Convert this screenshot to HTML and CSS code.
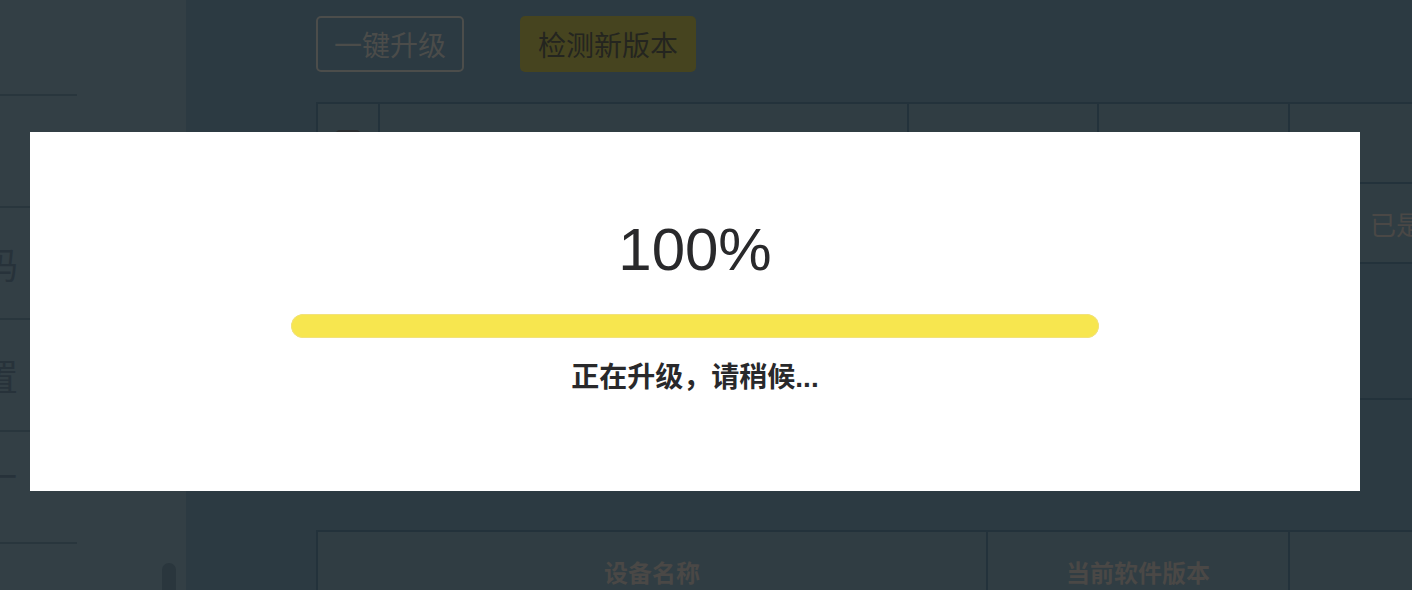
FILE: index.html
```html
<!DOCTYPE html>
<html lang="zh-CN">
<head>
<meta charset="utf-8">
<title>软件升级</title>
<link rel="stylesheet" href="styles.css">
</head>
<body>
<div class="page">
  <aside class="sidebar">
    <nav class="side-nav">
      <div class="side-head"></div>
      <div class="side-item"><span class="side-label"></span></div>
      <div class="side-item"><span class="side-label">修改密码</span></div>
      <div class="side-item"><span class="side-label">网络设置</span></div>
      <div class="side-item side-last"><span class="side-label">恢复出厂</span></div>
    </nav>
    <div class="scroll-thumb"></div>
  </aside>

  <main class="main">
    <div class="toolbar">
      <button class="btn btn-outline">一键升级</button>
      <button class="btn btn-primary">检测新版本</button>
    </div>

    <div class="grid grid-one">
      <div class="row row-head">
        <div class="cell c1"><span class="checkbox"></span></div>
        <div class="cell c2"></div>
        <div class="cell c3"></div>
        <div class="cell c4"></div>
        <div class="cell c5"></div>
      </div>
      <div class="row row-body">
        <div class="cell c1"><span class="checkbox"></span></div>
        <div class="cell c2">主控制器</div>
        <div class="cell c3">V2.1.0</div>
        <div class="cell c4">V2.1.0</div>
        <div class="cell c5">已是最新版本</div>
      </div>
      <div class="row row-empty">
        <div class="cell c1"></div>
        <div class="cell c2"></div>
        <div class="cell c3"></div>
        <div class="cell c4"></div>
        <div class="cell c5"></div>
      </div>
    </div>

    <p class="note">注意：升级过程中请勿断电或关闭设备，升级完成后设备将自动重启</p>

    <div class="grid grid-two">
      <div class="row row-head2">
        <div class="cell d1">设备名称</div>
        <div class="cell d2">当前软件版本</div>
        <div class="cell d3">升级状态</div>
      </div>
    </div>
  </main>
</div>

<div class="modal">
  <div class="percent">100%</div>
  <div class="track"><div class="fill" style="width:100%"></div></div>
  <div class="message">正在升级，请稍候...</div>
</div>
</body>
</html>
```

FILE: styles.css
```css
html, body {
  margin: 0;
  height: 590px;
  overflow: hidden;
  background: #2c3a42;
  font-family: "Noto Sans CJK SC", "Liberation Sans", sans-serif;
}

.page {
  display: flex;
  height: 590px;
}

/* Sidebar */
.sidebar {
  position: relative;
  flex: 0 0 186px;
  background: #333f45;
}

.side-nav {
  width: 77px;
}

.side-head {
  height: 94px;
}

.side-item {
  box-sizing: border-box;
  height: 112px;
  border-top: 2px solid #29363d;
  display: flex;
  align-items: center;
  font-size: 36px;
  color: #27323a;
}

.side-last {
  height: 114px;
  border-bottom: 2px solid #29363d;
}

.side-label {
  width: 18px;
  display: flex;
  justify-content: flex-end;
  white-space: nowrap;
  line-height: 1;
}

.scroll-thumb {
  position: absolute;
  left: 162px;
  top: 563px;
  width: 14px;
  height: 40px;
  border-radius: 7px;
  background: #2a363d;
}

/* Main */
.main {
  flex: 1;
  min-width: 0;
  padding: 16px 0 0 130px;
  overflow: hidden;
}

.toolbar {
  display: flex;
  gap: 56px;
}

.btn {
  box-sizing: border-box;
  height: 56px;
  padding: 0 16px;
  border: 2px solid transparent;
  border-radius: 5px;
  font-family: "Noto Sans CJK SC", sans-serif;
  font-size: 28px;
  line-height: 52px;
  margin: 0;
}

.btn-outline {
  border-color: #4c4d4b;
  color: #4b4c4a;
  background: transparent;
}

.btn-primary {
  background: #46441f;
  color: #24251f;
}

/* Tables */
.grid {
  width: max-content;
  border-top: 2px solid #23323b;
  border-left: 2px solid #23323b;
}

.grid-one {
  margin-top: 30px;
}

.row {
  display: flex;
}

.cell {
  box-sizing: border-box;
  border-right: 2px solid #23323b;
  border-bottom: 2px solid #23323b;
  display: flex;
  align-items: center;
  justify-content: center;
  color: #4a4846;
  font-size: 26px;
}

.row-head .cell,
.row-body .cell {
  height: 80px;
  background: #303d43;
}

.row-empty .cell {
  height: 136px;
}

.c1 { flex: 0 0 62px; }
.c2 { flex: 0 0 529px; }
.c3 { flex: 0 0 190px; }
.c4 { flex: 0 0 191px; }
.c5 { flex: 0 0 318px; }

.checkbox {
  width: 26px;
  height: 26px;
  border-radius: 5px;
  background: #2b2e30;
}

.note {
  margin: 59px 0 37px 14px;
  height: 34px;
  line-height: 34px;
  font-size: 24px;
  color: #232d34;
  white-space: nowrap;
}

.row-head2 .cell {
  height: 80px;
  background: #303d43;
  font-size: 24px;
  font-weight: 700;
  color: #4a4846;
}

.d1 { flex: 0 0 670px; }
.d2 { flex: 0 0 302px; }
.d3 { flex: 0 0 400px; }

/* Modal */
.modal {
  position: fixed;
  left: 30px;
  top: 132px;
  width: 1330px;
  height: 359px;
  box-sizing: border-box;
  background: #ffffff;
  padding-top: 88px;
  display: flex;
  flex-direction: column;
  align-items: center;
}

.percent {
  font-family: "Liberation Sans", sans-serif;
  font-size: 60px;
  line-height: 60px;
  color: #29292b;
}

.track {
  margin-top: 34px;
  width: 808px;
  height: 24px;
  border-radius: 12px;
  background: #f1f1f1;
  overflow: hidden;
}

.fill {
  height: 100%;
  border-radius: 12px;
  background: #f7e64f;
  box-shadow: inset 0 0 0 1px #f2e27c;
}

.message {
  margin-top: 26px;
  font-family: "Liberation Sans", "Noto Sans CJK SC", sans-serif;
  font-size: 28px;
  line-height: 28px;
  font-weight: 700;
  color: #29292b;
}
```
